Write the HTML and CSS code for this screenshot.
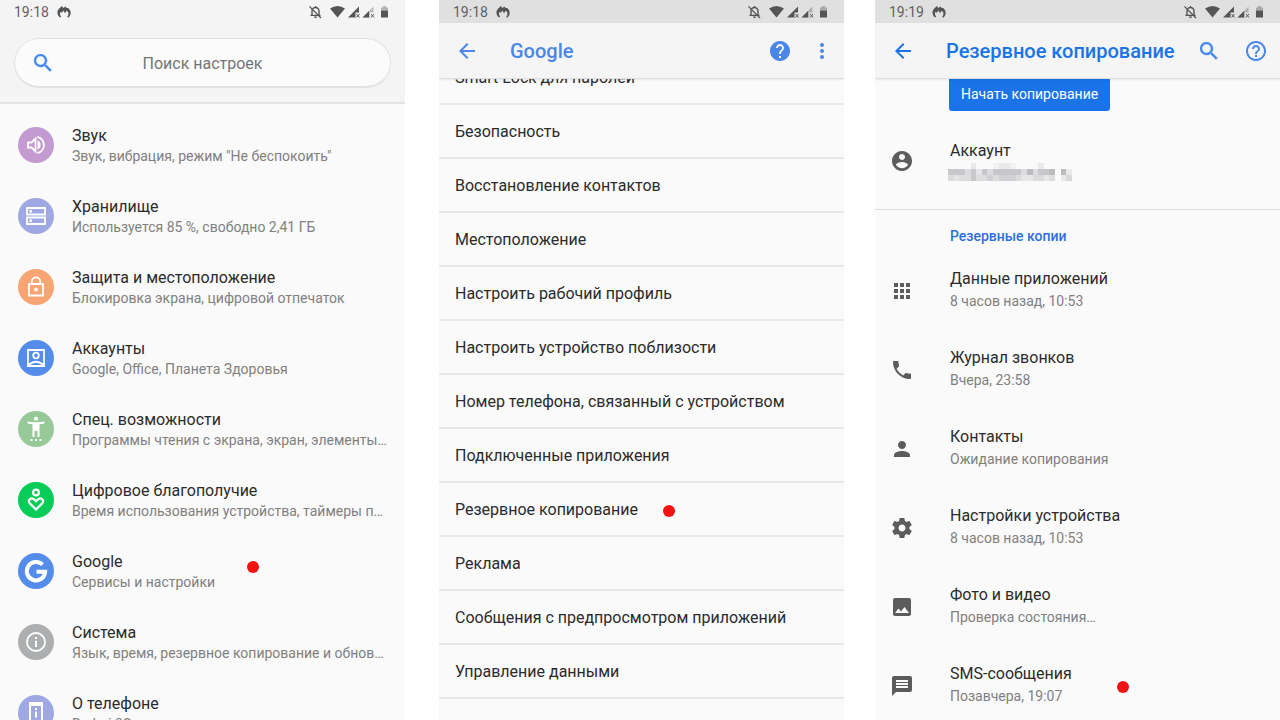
FILE: index.html
```
<!DOCTYPE html>
<html lang="ru">
<head>
    <meta charset="utf-8">
    <meta name="viewport" content="width=device-width, initial-scale=1.0">
    <title>Резервное копирование</title>
    <link rel="stylesheet" href="styles.css">
</head>
<body>
    <!-- shared icons -->
    <svg class="sprite" aria-hidden="true">
        <symbol id="i-flame" viewBox="0 0 14 12">
            <path d="M3.2 11.6 C-.2 9 -.4 5 2.2 2.4 L5 0 L6.2 2 L8.6 .4 L9.6 2 L11.200 2 C14.600 5 14.400 9 11.200 11.800 L10.200 11 C11.600 9 11.800 7.200 10.800 5.400 L9.400 5 L8 7.200 L6.400 4.400 L4.800 6.800 L3.400 6 C2.600 7.600 2.900 9 4.200 10.600 Z" fill="currentColor"/>
        </symbol>
        <symbol id="i-status" viewBox="0 0 82 14">
            <path d="M4 10 V6 a3.5 3.5 0 0 1 7 0 V10 M2.5 10.4 H12.5 M7.5 1 V3" fill="none" stroke="currentColor" stroke-width="1.4"/>
            <path d="M6 11.6 h3 a1.5 1.5 0 0 1 -3 0z" fill="currentColor"/>
            <path d="M1.4 1.4 L13 13" stroke="currentColor" stroke-width="1.3"/>
            <path d="M22 3.4 Q29.500 -1.600 37 3.400 L29.500 12.500 Z" fill="currentColor"/>
            <path d="M40 12.500 L51 1.500 V7.500 H47.500 V12.500 Z" fill="currentColor"/>
            <path d="M48.500 9 l3 3.500 M51.500 9 l-3 3.500" stroke="currentColor" stroke-width="1"/>
            <path d="M54.500 12.500 L65.500 1.500 V7.500 H62 V12.500 Z" fill="currentColor" opacity=".35"/>
            <path d="M54.500 12.500 L61 6 V12.500 Z" fill="currentColor"/>
            <path d="M63 9 l3 3.500 M66 9 l-3 3.500" stroke="currentColor" stroke-width="1"/>
            <path d="M73 2.500 h2 v-1.500 h3 v1.500 h2 v3 h-7z" fill="currentColor" opacity=".4"/>
            <path d="M73 5.500 h7 v7 h-7z" fill="currentColor"/>
        </symbol>
        <symbol id="i-search" viewBox="3 3 18 18">
            <path d="M15.500 14h-.79l-.28-.27A6.470 6.470 0 0 0 16 9.500 6.500 6.500 0 1 0 9.500 16c1.610 0 3.090-.59 4.230-1.570l.27.28v.79l5 4.990L20.490 19l-4.990-5zm-6 0C7.010 14 5 11.990 5 9.500S7.010 5 9.500 5 14 7.010 14 9.500 11.990 14 9.500 14z" fill="currentColor" stroke="currentColor" stroke-width=".4"/>
        </symbol>
        <symbol id="i-back" viewBox="4 4 16 16">
            <path d="M20 11H7.830l5.590-5.590L12 4l-8 8 8 8 1.410-1.410L7.830 13H20v-2z" fill="currentColor"/>
        </symbol>
        <symbol id="i-help" viewBox="2 2 20 20">
            <path d="M12 2C6.480 2 2 6.480 2 12s4.480 10 10 10 10-4.480 10-10S17.520 2 12 2zm1 17h-2v-2h2v2zm2.070-7.750l-.9.920C13.450 12.900 13 13.500 13 15h-2v-.5c0-1.100.45-2.100 1.170-2.830l1.240-1.260c.37-.36.59-.86.59-1.410 0-1.100-.9-2-2-2s-2 .9-2 2H8c0-2.210 1.790-4 4-4s4 1.790 4 4c0 .88-.36 1.680-.93 2.250z" fill="currentColor"/>
        </symbol>
        <symbol id="i-help-outline" viewBox="2 2 20 20">
            <path d="M11 18h2v-2h-2v2zm1-16C6.480 2 2 6.480 2 12s4.480 10 10 10 10-4.480 10-10S17.520 2 12 2zm0 18c-4.410 0-8-3.590-8-8s3.590-8 8-8 8 3.590 8 8-3.590 8-8 8zm0-14c-2.210 0-4 1.790-4 4h2c0-1.100.9-2 2-2s2 .9 2 2c0 2-3 1.750-3 5h2c0-2.250 3-2.500 3-5 0-2.210-1.790-4-4-4z" fill="currentColor"/>
        </symbol>
    </svg>

    <main class="screens">
        <!-- settings -->
        <section class="phone">
            <header class="search-header">
                <div class="status-bar">
                    <span>19:18</span>
                    <svg class="flame"><use href="#i-flame"/></svg>
                    <svg class="status-icons"><use href="#i-status"/></svg>
                </div>
                <label class="search">
                    <svg class="search-icon"><use href="#i-search"/></svg>
                    <input type="text" placeholder="Поиск настроек" aria-label="Поиск настроек">
                </label>
            </header>
            <div class="content">
                <ul class="settings">
                    <li>
                        <svg class="round purple" viewBox="0 0 36 36"><path d="M10 15.500 h3.500 l4-4 v13 l-4-4 h-3.500z" fill="none" stroke="#fff" stroke-width="1.800"/><path d="M19.500 13.500 a4.800 4.800 0 0 1 0 9z" fill="#fff"/><path d="M19.500 10 a8.200 8.200 0 0 1 0 16" fill="none" stroke="#fff" stroke-width="1.800"/></svg>
                        <div class="text"><h2>Звук</h2><p>Звук, вибрация, режим "Не беспокоить"</p></div>
                    </li>
                    <li>
                        <svg class="round indigo" viewBox="0 0 36 36"><path d="M9 10 h18 v6.500 h-18z M9 19.500 h18 v6.500 h-18z" fill="none" stroke="#fff" stroke-width="1.800"/><path d="M11.500 12 h2.500 v2.500 h-2.500z M11.500 21.500 h2.500 v2.500 h-2.500z" fill="#fff"/></svg>
                        <div class="text"><h2>Хранилище</h2><p>Используется 85 %, свободно 2,41 ГБ</p></div>
                    </li>
                    <li>
                        <svg class="round orange" viewBox="0 0 36 36"><path d="M11 15 h14 v11.500 h-14z M13.800 15 v-2.500 a4.200 4.200 0 0 1 8.400 0 V15" fill="none" stroke="#fff" stroke-width="1.800"/><circle cx="18" cy="20.500" r="1.900" fill="#fff"/></svg>
                        <div class="text"><h2>Защита и местоположение</h2><p>Блокировка экрана, цифровой отпечаток</p></div>
                    </li>
                    <li>
                        <svg class="round blue" viewBox="0 0 36 36"><path d="M10 10 h16 v16 h-16z M11 24.500 q7-5.500 14 0" fill="none" stroke="#fff" stroke-width="1.800"/><circle cx="18" cy="15.500" r="2.800" fill="none" stroke="#fff" stroke-width="1.800"/></svg>
                        <div class="text"><h2>Аккаунты</h2><p>Google, Office, Планета Здоровья</p></div>
                    </li>
                    <li>
                        <svg class="round green" viewBox="0 0 36 36"><circle cx="18" cy="7.800" r="2" fill="#fff"/><path d="M9.500 10.500 q8.500 1.600 17 0 v2 q-2.500 .6-5 .8 V26 h-2 v-6 h-3 v6 h-2 V13.300 q-2.500 -.2-5-.8z M12.500 28 h2 v2 h-2z M17 28 h2 v2 h-2z M21.500 28 h2 v2 h-2z" fill="#fff"/></svg>
                        <div class="text"><h2>Спец. возможности</h2><p>Программы чтения с экрана, экран, элементы…</p></div>
                    </li>
                    <li>
                        <svg class="round emerald" viewBox="0 0 36 36"><g fill="none" stroke="#fff" stroke-width="2.200"><circle cx="18" cy="10.500" r="2.900"/><path d="M18 27.500 L12 21.600 C9.200 18.600 12.500 15.200 15.500 17 L18 19.300 L20.500 17 C23.500 15.200 26.800 18.600 24 21.600 Z"/></g></svg>
                        <div class="text"><h2>Цифровое благополучие</h2><p>Время использования устройства, таймеры п…</p></div>
                    </li>
                    <li>
                        <svg class="round blue" viewBox="0 0 36 36"><path d="M24.500 11.700 A9.200 9.200 0 1 0 27.200 18.700 H18.500" fill="none" stroke="#fff" stroke-width="4"/></svg>
                        <div class="text"><h2>Google</h2><p>Сервисы и настройки</p></div>
                        <i class="marker marker-google"></i>
                    </li>
                    <li>
                        <svg class="round grey" viewBox="0 0 36 36"><circle cx="18" cy="18" r="9" fill="none" stroke="#fff" stroke-width="1.800"/><path d="M17 13 h2 v2 h-2z M17 16.700 h2 v6.300 h-2z" fill="#fff"/></svg>
                        <div class="text"><h2>Система</h2><p>Язык, время, резервное копирование и обнов…</p></div>
                    </li>
                    <li>
                        <svg class="round indigo" viewBox="0 0 36 36"><path d="M12 8 h12 v20 h-12z" fill="none" stroke="#fff" stroke-width="2"/><path d="M12 8 h12 v3 h-12z M12 25 h12 v3 h-12z M17 13 h2 v2 h-2z M17 16.500 h2 v6 h-2z" fill="#fff"/></svg>
                        <div class="text"><h2>О телефоне</h2><p>Redmi 3S</p></div>
                    </li>
                </ul>
            </div>
        </section>

        <!-- google services -->
        <section class="phone services-phone">
            <div class="status-bar dark">
                <span>19:18</span>
                <svg class="flame"><use href="#i-flame"/></svg>
                <svg class="status-icons"><use href="#i-status"/></svg>
            </div>
            <header class="app-bar">
                <button class="icon-btn" aria-label="Назад"><svg class="arrow"><use href="#i-back"/></svg></button>
                <h1>Google</h1>
                <button class="icon-btn" aria-label="Справка"><svg><use href="#i-help"/></svg></button>
                <button class="icon-btn" aria-label="Ещё"><svg viewBox="0 0 20 20"><g fill="currentColor"><circle cx="10" cy="4" r="2"/><circle cx="10" cy="10" r="2"/><circle cx="10" cy="16" r="2"/></g></svg></button>
            </header>
            <div class="content">
                <ul class="services">
                    <li>Smart Lock для паролей</li>
                    <li>Безопасность</li>
                    <li>Восстановление контактов</li>
                    <li>Местоположение</li>
                    <li>Настроить рабочий профиль</li>
                    <li>Настроить устройство поблизости</li>
                    <li>Номер телефона, связанный с устройством</li>
                    <li>Подключенные приложения</li>
                    <li>Резервное копирование<i class="marker marker-backup"></i></li>
                    <li>Реклама</li>
                    <li>Сообщения с предпросмотром приложений</li>
                    <li>Управление данными</li>
                </ul>
            </div>
        </section>

        <!-- backup -->
        <section class="phone">
            <div class="status-bar dark">
                <span>19:19</span>
                <svg class="flame"><use href="#i-flame"/></svg>
                <svg class="status-icons"><use href="#i-status"/></svg>
            </div>
            <header class="app-bar strong">
                <button class="icon-btn" aria-label="Назад"><svg class="arrow"><use href="#i-back"/></svg></button>
                <h1>Резервное копирование</h1>
                <button class="icon-btn" aria-label="Поиск"><svg class="search-icon"><use href="#i-search"/></svg></button>
                <button class="icon-btn" aria-label="Справка"><svg><use href="#i-help-outline"/></svg></button>
            </header>
            <div class="content">
                <button class="start-btn">Начать копирование</button>
                <div class="backup-row account">
                    <svg viewBox="2 2 20 20"><path d="M12 2C6.480 2 2 6.480 2 12s4.480 10 10 10 10-4.480 10-10S17.520 2 12 2zm0 3c1.660 0 3 1.340 3 3s-1.340 3-3 3-3-1.340-3-3 1.340-3 3-3zm0 14.200c-2.500 0-4.710-1.280-6-3.220.03-1.990 4-3.080 6-3.080 1.990 0 5.970 1.090 6 3.080-1.290 1.940-3.500 3.220-6 3.220z"/></svg>
                    <div class="text">
                        <h2>Аккаунт</h2>
                        <!-- hidden address -->
                        <svg class="mosaic" viewBox="0 0 22 3" preserveAspectRatio="none" shape-rendering="crispEdges">
                            <path d="M0 1h20v2h-20z" fill="#dcdcde"/>
                            <path d="M4 0h1v1h-1z M9 0h2v1h-2z M16 0h1v1h-1z" fill="#e9e9e9"/>
                            <path d="M8 0h1v1h-1z M11 0h1v1h-1z" fill="#f3f3f3"/>
                            <path d="M0 1h3v1h-3z M4 1h1v2h-1z M6 1h1v1h-1z M8 1h5v1h-5z M16 1h2v1h-2z" fill="#c8c8ca"/>
                            <path d="M14 1h1v1h-1z M18 1h1v1h-1z" fill="#bcbcbe"/>
                            <path d="M9 2h3v1h-3z M7 2h1v1h-1z" fill="#d0d0d5"/>
                            <path d="M1 2h1v1h-1z M5 1h1v1h-1z M13 2h2v1h-2z M17 2h1v1h-1z" fill="#e6e6e8"/>
                            <path d="M19 1h1v2h-1z" fill="#fafafa"/>
                            <path d="M20 1h1v1h-1z" fill="#bcbcbe"/>
                            <path d="M21 1h1v1h-1z M20 2h1v1h-1z" fill="#e9e9e9"/>
                            <path d="M21 2h1v1h-1z" fill="#d8d8da"/>
                        </svg>
                    </div>
                </div>
                <h3 class="section-title">Резервные копии</h3>
                <div class="backup-row">
                    <svg viewBox="2 2 20 20"><path d="M4 8h4V4H4v4zm6 12h4v-4h-4v4zm-6 0h4v-4H4v4zm0-6h4v-4H4v4zm6 0h4v-4h-4v4zm6-10v4h4V4h-4zm-6 4h4V4h-4v4zm6 6h4v-4h-4v4zm0 6h4v-4h-4v4z"/></svg>
                    <div class="text"><h2>Данные приложений</h2><p>8 часов назад, 10:53</p></div>
                </div>
                <div class="backup-row">
                    <svg viewBox="2 2 20 20"><path d="M6.620 10.790c1.440 2.830 3.760 5.140 6.590 6.590l2.200-2.200c.27-.27.67-.36 1.020-.24 1.120.37 2.330.57 3.570.57.55 0 1 .45 1 1V20c0 .55-.45 1-1 1-9.390 0-17-7.610-17-17 0-.55.45-1 1-1h3.500c.55 0 1 .45 1 1 0 1.250.2 2.450.57 3.570.11.35.03.74-.25 1.020l-2.200 2.200z"/></svg>
                    <div class="text"><h2>Журнал звонков</h2><p>Вчера, 23:58</p></div>
                </div>
                <div class="backup-row">
                    <svg viewBox="2 2 20 20"><path d="M12 12c2.210 0 4-1.790 4-4s-1.790-4-4-4-4 1.790-4 4 1.790 4 4 4zm0 2c-2.670 0-8 1.340-8 4v2h16v-2c0-2.660-5.330-4-8-4z"/></svg>
                    <div class="text"><h2>Контакты</h2><p>Ожидание копирования</p></div>
                </div>
                <div class="backup-row">
                    <svg viewBox="2 2 20 20"><path d="M19.430 12.980c.04-.32.07-.64.07-.98s-.03-.66-.07-.98l2.110-1.650c.19-.15.24-.42.12-.64l-2-3.460c-.12-.22-.39-.3-.61-.22l-2.490 1c-.52-.4-1.080-.73-1.690-.98l-.38-2.650C14.460 2.180 14.250 2 14 2h-4c-.25 0-.46.18-.49.42l-.38 2.650c-.61.25-1.170.59-1.690.98l-2.490-1c-.23-.09-.49 0-.61.22l-2 3.460c-.13.22-.07.49.12.64l2.110 1.650c-.04.32-.07.65-.07.98s.03.66.07.98l-2.110 1.650c-.19.15-.24.42-.12.64l2 3.460c.12.22.39.3.61.22l2.490-1c.52.4 1.080.73 1.690.98l.38 2.650c.03.24.24.42.49.42h4c.25 0 .46-.18.49-.42l.38-2.650c.61-.25 1.170-.59 1.690-.98l2.490 1c.23.09.49 0 .61-.22l2-3.460c.12-.22.07-.49-.12-.64l-2.110-1.650zM12 15.500c-1.930 0-3.500-1.570-3.500-3.500s1.570-3.500 3.500-3.500 3.500 1.570 3.500 3.500-1.570 3.500-3.500 3.500z"/></svg>
                    <div class="text"><h2>Настройки устройства</h2><p>8 часов назад, 10:53</p></div>
                </div>
                <div class="backup-row">
                    <svg viewBox="2 2 20 20"><path d="M21 19V5c0-1.100-.9-2-2-2H5c-1.100 0-2 .9-2 2v14c0 1.100.9 2 2 2h14c1.100 0 2-.9 2-2zM8.500 13.500l2.500 3.010L14.500 12l4.500 6H5l3.500-4.500z"/></svg>
                    <div class="text"><h2>Фото и видео</h2><p>Проверка состояния…</p></div>
                </div>
                <div class="backup-row">
                    <svg viewBox="2 2 20 20"><path d="M20 2H4c-1.100 0-1.990.9-1.990 2L2 22l4-4h14c1.100 0 2-.9 2-2V4c0-1.100-.9-2-2-2zm-2 12H6v-2h12v2zm0-3H6V9h12v2zm0-3H6V6h12v2z"/></svg>
                    <div class="text"><h2>SMS-сообщения</h2><p>Позавчера, 19:07</p></div>
                    <i class="marker marker-sms"></i>
                </div>
            </div>
        </section>
    </main>
</body>
</html>
```
FILE: styles.css
```
* {
    box-sizing: border-box;
}
body {
    margin: 0;
    background-color: white;
    color: #2b2b2b;
    font-family: Roboto, "Noto Sans", sans-serif;
}
h1, h2, h3, p, ul {
    margin: 0;
    padding: 0;
    font-weight: normal;
}
ul {
    list-style: none;
}
button {
    border: none;
    padding: 0;
    font-family: inherit;
    cursor: pointer;
}
.sprite {
    display: none;
}
.screens {
    display: flex;
    height: 100vh;
}
.phone {
    flex: 1;
    min-width: 0;
    display: flex;
    flex-direction: column;
    background-color: #fafafa;
    overflow: hidden;
}
.services-phone {
    margin: 0 31px 0 34px;
}
.content {
    flex: 1;
    min-height: 0;
    overflow: hidden;
}

/* status bar */
.status-bar {
    display: flex;
    align-items: center;
    flex-shrink: 0;
    height: 23px;
    padding: 0 15px 0 14px;
    font-size: 14px;
    color: #616161;
}
.status-bar.dark {
    background-color: #e0e0e0;
}
.flame {
    width: 14px;
    height: 12px;
    margin-left: 8px;
    color: #555;
}
.status-icons {
    width: 82px;
    height: 14px;
    margin-left: auto;
    color: #555;
}

/* search */
.search-header {
    flex-shrink: 0;
    background-color: #f4f4f4;
    border-bottom: 2px solid #e4e4e4;
}
.search {
    display: flex;
    align-items: center;
    height: 50px;
    margin: 15px 14px 14px;
    padding: 0 19px;
    border: 1px solid #e2e2e2;
    border-bottom-width: 2px;
    border-radius: 25px;
    background-color: #fbfbfb;
}
.search-icon {
    width: 18px;
    height: 18px;
    color: #4285f4;
}
.search input {
    flex: 1;
    min-width: 0;
    margin-right: 18px;
    padding: 2px 0 0;
    border: none;
    outline: none;
    background: none;
    font-family: inherit;
    font-size: 16px;
    text-align: center;
}
.search input::placeholder {
    color: #757575;
    opacity: 1;
}

/* rows */
.text {
    flex: 1;
    min-width: 0;
}
.text h2 {
    font-size: 16px;
    line-height: 20px;
}
.text p {
    font-size: 14px;
    line-height: 20px;
    color: #808080;
    white-space: nowrap;
}
.settings {
    padding-top: 5px;
}
.settings li {
    position: relative;
    display: flex;
    align-items: center;
    height: 71px;
    padding: 0 16px 0 18px;
}
.settings .text {
    padding-top: 3px;
}
.round {
    flex-shrink: 0;
    width: 36px;
    height: 36px;
    margin-right: 18px;
    border-radius: 50%;
}
.purple { background-color: #c39bd0; }
.indigo { background-color: #9fa8e2; }
.orange { background-color: #f8a574; }
.blue { background-color: #548cea; }
.green { background-color: #96c997; }
.emerald { background-color: #07cc57; }
.grey { background-color: #acaeb0; }

/* red dots */
.marker {
    position: absolute;
    width: 12px;
    height: 12px;
    border-radius: 50%;
    background-color: #f31212;
}
.marker-google {
    left: 247px;
    top: 26px;
}
.marker-backup {
    left: 224px;
    top: 22px;
}
.marker-sms {
    left: 242px;
    top: 35px;
}

/* app bar */
.app-bar {
    position: relative;
    display: flex;
    align-items: center;
    flex-shrink: 0;
    gap: 20px;
    height: 56px;
    padding: 0 11px 0 17px;
    background-color: #f5f5f5;
    border-bottom: 1px solid #dedede;
    box-shadow: 0 1px 2px rgba(0, 0, 0, 0.08);
    color: #4a86e8;
}
.app-bar h1 {
    flex: 1;
    min-width: 0;
    margin-left: 12px;
    font-size: 20px;
    font-weight: 500;
    white-space: nowrap;
}
.app-bar.strong {
    gap: 25px;
    padding-right: 13px;
    color: #1a73e8;
}
.app-bar.strong h1 {
    margin-left: 7px;
}
.icon-btn {
    display: flex;
    align-items: center;
    justify-content: center;
    flex-shrink: 0;
    width: 22px;
    height: 40px;
    background: none;
    color: #4a86e8;
}
.icon-btn svg {
    width: 20px;
    height: 20px;
}
.icon-btn .arrow {
    width: 16px;
    height: 16px;
}
.strong .icon-btn:first-child {
    color: #1a73e8;
}
.icon-btn .search-icon {
    width: 18px;
    height: 18px;
}

/* services list, scrolled a little */
.services {
    margin-top: -28px;
}
.services li {
    position: relative;
    height: 54px;
    padding-left: 16px;
    border-bottom: 2px solid #e8e8e8;
    font-size: 16px;
    line-height: 54px;
}

/* backup screen */
.start-btn {
    display: block;
    height: 34px;
    margin: -2px 0 0 74px;
    padding: 0 12px;
    border-radius: 3px;
    background-color: #1a73e8;
    color: white;
    font-size: 14px;
}
.backup-row {
    position: relative;
    display: flex;
    align-items: center;
    height: 79px;
    padding: 0 16px 0 17px;
}
.backup-row > svg {
    flex-shrink: 0;
    width: 20px;
    height: 20px;
    margin-right: 38px;
    fill: #5c5c5c;
}
.backup-row p {
    line-height: 24px;
}
.account {
    height: 99px;
    padding-top: 2px;
    border-bottom: 1px solid #dcdcdc;
}
.mosaic {
    display: block;
    width: 124px;
    height: 18px;
    margin: 2px 0 0 -2px;
}
.section-title {
    margin: 16px 0 5px 75px;
    font-size: 14px;
    font-weight: 500;
    line-height: 20px;
    color: #2a6fe0;
}
```
